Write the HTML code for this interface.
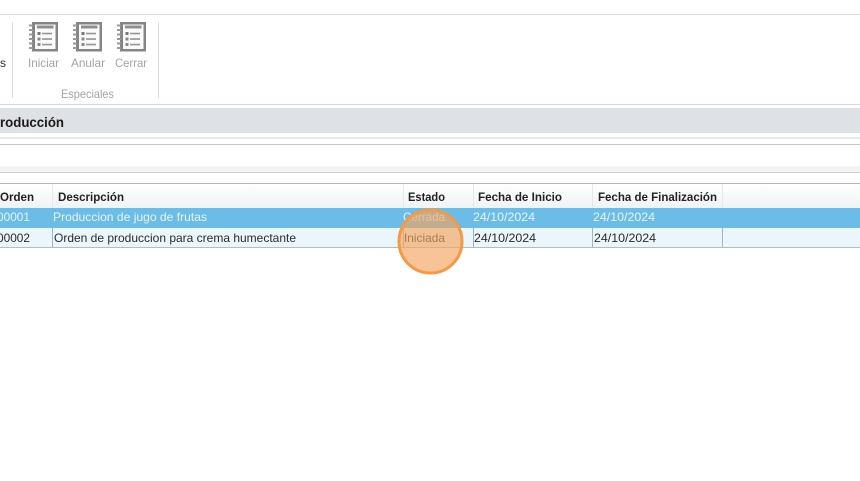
<!DOCTYPE html>
<html><head><meta charset="utf-8"><style>
html,body{margin:0;padding:0;background:#fff;width:860px;height:481px;overflow:hidden}
svg{display:block}
text{font-family:"Liberation Sans",sans-serif;font-size:12px}
.b{font-weight:bold;fill:#222}
.g{fill:#a3a3a3}
.d{fill:#2b2b2b}
.w{fill:#e8f4fb}
</style></head><body>
<svg width="860" height="481" viewBox="0 0 860 481" xmlns="http://www.w3.org/2000/svg">
<defs>
<linearGradient id="h" x1="0" y1="0" x2="0" y2="1"><stop offset="0" stop-color="#fff"/><stop offset="1" stop-color="#f0f2f4"/></linearGradient>
<g id="ic">
<rect x="3" y="0" width="26" height="29.500" fill="#858585"/>
<g fill="#9a9a9a"><rect x="0" y="2.500" width="4" height="2"/><rect x="0" y="7" width="4" height="2"/><rect x="0" y="11.500" width="4" height="2"/><rect x="0" y="16" width="4" height="2"/><rect x="0" y="20.500" width="4" height="2"/><rect x="0" y="25" width="4" height="2"/></g>
<rect x="6" y="2.500" width="20.500" height="24.500" fill="#fbfbfb"/>
<rect x="8" y="3.500" width="16.500" height="3" fill="#8f8f8f"/>
<rect x="8.500" y="10" width="3" height="3" fill="#777"/><rect x="13" y="10.700" width="10" height="1.700" fill="#999"/>
<rect x="8.500" y="15.500" width="3" height="3" fill="#8a8a8a"/><rect x="13" y="16.200" width="10" height="1.700" fill="#999"/>
<rect x="8.500" y="21" width="3" height="3" fill="#8a8a8a"/><rect x="13" y="21.700" width="10" height="1.700" fill="#999"/>
</g>
</defs>
<rect width="860" height="481" fill="#fff"/>
<rect y="14" width="860" height="1" fill="#dcdcdc"/>
<rect x="12" y="22" width="1" height="76" fill="#dedede"/>
<rect x="158" y="22" width="1" height="76" fill="#dedede"/>
<use href="#ic" x="29" y="22"/><use href="#ic" x="73" y="22"/><use href="#ic" x="117" y="22"/>
<text x="0" y="67" class="d">s</text>
<text x="28" y="67" class="g" textLength="31" lengthAdjust="spacingAndGlyphs">Iniciar</text>
<text x="71" y="67" class="g" textLength="34" lengthAdjust="spacingAndGlyphs">Anular</text>
<text x="115" y="67" class="g" textLength="32" lengthAdjust="spacingAndGlyphs">Cerrar</text>
<text x="61" y="98" class="g" textLength="53" lengthAdjust="spacingAndGlyphs">Especiales</text>
<rect y="104" width="860" height="1" fill="#d8d8d8"/>
<rect y="108" width="860" height="25" fill="#dee1e5"/>
<text x="0" y="127" style="font-size:14px;font-weight:bold;fill:#1a1a1a" textLength="64" lengthAdjust="spacingAndGlyphs">roducción</text>
<rect y="137" width="860" height="2" fill="#e8e8e8"/>
<rect y="144" width="860" height="1" fill="#c8c8c8"/>
<rect y="166" width="860" height="6" fill="#f3f3f3"/>
<rect y="172" width="860" height="1" fill="#cfcfcf"/>
<rect y="183" width="860" height="1" fill="#b4b4b4"/>
<rect y="184" width="860" height="24" fill="url(#h)"/>
<g fill="#e6e8ea"><rect x="52" y="184" width="1" height="24"/><rect x="403" y="184" width="1" height="24"/><rect x="473" y="184" width="1" height="24"/><rect x="592" y="184" width="1" height="24"/><rect x="722" y="184" width="1" height="24"/></g>
<text x="0" y="201" class="b" textLength="34" lengthAdjust="spacingAndGlyphs">Orden</text>
<text x="58" y="201" class="b" textLength="66" lengthAdjust="spacingAndGlyphs">Descripción</text>
<text x="408" y="201" class="b" textLength="37" lengthAdjust="spacingAndGlyphs">Estado</text>
<text x="478" y="201" class="b" textLength="84" lengthAdjust="spacingAndGlyphs">Fecha de Inicio</text>
<text x="598" y="201" class="b" textLength="119" lengthAdjust="spacingAndGlyphs">Fecha de Finalización</text>
<rect y="208" width="860" height="20" fill="#6bbce6"/>
<rect y="228" width="860" height="19" fill="#eaf5fc"/>
<rect y="247" width="860" height="1" fill="#b4bcc2"/>
<g fill="#9fb4c2"><rect x="52" y="228" width="1" height="19"/><rect x="403" y="228" width="1" height="19"/><rect x="473" y="228" width="1" height="19"/><rect x="592" y="228" width="1" height="19"/><rect x="722" y="228" width="1" height="19"/></g>
<text x="-3" y="221" class="w" textLength="33" lengthAdjust="spacingAndGlyphs">00001</text>
<text x="53" y="221" class="w" textLength="154" lengthAdjust="spacingAndGlyphs">Produccion de jugo de frutas</text>
<text x="403" y="221" class="w" textLength="42" lengthAdjust="spacingAndGlyphs">Cerrada</text>
<text x="473" y="221" class="w" textLength="62" lengthAdjust="spacingAndGlyphs">24/10/2024</text>
<text x="593" y="221" class="w" textLength="62" lengthAdjust="spacingAndGlyphs">24/10/2024</text>
<text x="-3" y="242" class="d" textLength="33" lengthAdjust="spacingAndGlyphs">00002</text>
<text x="54" y="242" class="d" textLength="242" lengthAdjust="spacingAndGlyphs">Orden de produccion para crema humectante</text>
<text x="404" y="242" class="d" textLength="41" lengthAdjust="spacingAndGlyphs">Iniciada</text>
<text x="474" y="242" class="d" textLength="62" lengthAdjust="spacingAndGlyphs">24/10/2024</text>
<text x="594" y="242" class="d" textLength="62" lengthAdjust="spacingAndGlyphs">24/10/2024</text>
<circle cx="430.500" cy="241.500" r="31.500" fill="#f4a460" fill-opacity="0.65" stroke="#f49a45" stroke-width="3"/>
</svg>
</body></html>
